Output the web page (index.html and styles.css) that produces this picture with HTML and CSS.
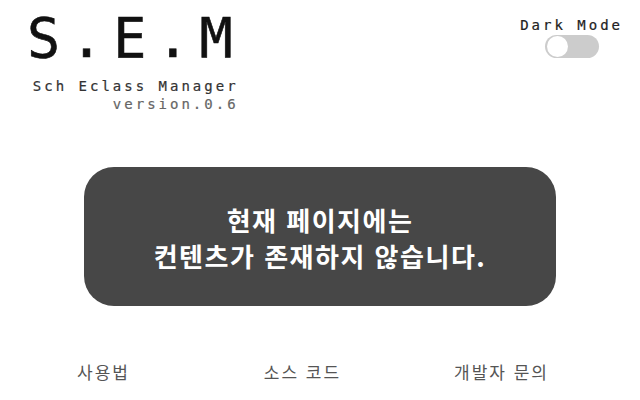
FILE: index.html
```html
<!DOCTYPE html>
<html lang="ko">
<head>
<meta charset="utf-8">
<title>S.E.M</title>
<link rel="stylesheet" href="styles.css">
</head>
<body>
<div class="page">
  <header class="header">
    <div class="brand">
      <h1 class="title">S.E.M</h1>
      <div class="subtitle">Sch Eclass Manager</div>
      <div class="version">version.0.6</div>
    </div>
    <div class="mode">
      <span class="mode-label">Dark Mode</span>
      <label class="toggle"><span class="knob"></span></label>
    </div>
  </header>
  <main class="notice">
    <p>현재 페이지에는<br>컨텐츠가 존재하지 않습니다.</p>
  </main>
  <nav class="links">
    <a class="link">사용법</a>
    <a class="link">소스 코드</a>
    <a class="link">개발자 문의</a>
  </nav>
</div>
</body>
</html>
```

FILE: styles.css
```css
html, body {
  margin: 0;
  padding: 0;
  background: #ffffff;
}

.page {
  width: 640px;
  height: 400px;
  display: flex;
  flex-direction: column;
}

.header {
  display: flex;
  justify-content: space-between;
  align-items: flex-start;
  padding: 0 17px 0 27px;
  font-family: "DejaVu Sans Mono", monospace;
}

.brand {
  display: flex;
  flex-direction: column;
  align-items: flex-end;
}

.title {
  margin: 8px 0 0 0;
  font-size: 55px;
  line-height: 60px;
  font-weight: normal;
  letter-spacing: 10px;
  color: #111;
  align-self: flex-start;
  -webkit-text-stroke: 0.6px #111;
}

.subtitle {
  margin-top: 9px;
  margin-right: 4px;
  font-size: 14px;
  line-height: 18px;
  letter-spacing: 3px;
  color: #333;
  -webkit-text-stroke: 0.2px #333;
}

.version {
  margin-right: 4px;
  font-size: 14px;
  line-height: 18px;
  letter-spacing: 3px;
  color: #666;
  -webkit-text-stroke: 0.2px #666;
}

.mode {
  display: flex;
  flex-direction: column;
  align-items: center;
  margin-top: 16px;
}

.mode-label {
  font-size: 14px;
  line-height: 18px;
  letter-spacing: 3px;
  color: #222;
  -webkit-text-stroke: 0.2px #222;
}

.toggle {
  display: flex;
  align-items: center;
  width: 54px;
  height: 23px;
  border-radius: 12px;
  background: #cccccc;
  margin-top: 1px;
  padding: 0 2px;
  box-sizing: border-box;
}

.knob {
  width: 21px;
  height: 21px;
  border-radius: 50%;
  background: #ffffff;
}

.notice {
  align-self: center;
  margin-top: 54px;
  width: 472px;
  height: 139px;
  border-radius: 30px;
  background: #474747;
  display: flex;
  align-items: center;
  justify-content: center;
}

.notice p {
  margin: 2px 0 0 0;
  color: #ffffff;
  font-family: "Noto Sans CJK KR", sans-serif;
  font-weight: bold;
  font-size: 26px;
  line-height: 36px;
  letter-spacing: 1.5px;
  text-align: center;
}

.links {
  display: grid;
  grid-template-columns: repeat(3, 199px);
  padding-left: 4px;
  margin-top: 54px;
  font-family: "Noto Sans CJK KR", sans-serif;
  font-size: 17px;
  line-height: 24px;
  letter-spacing: 2px;
  color: #555;
}

.link {
  text-align: center;
}
```
